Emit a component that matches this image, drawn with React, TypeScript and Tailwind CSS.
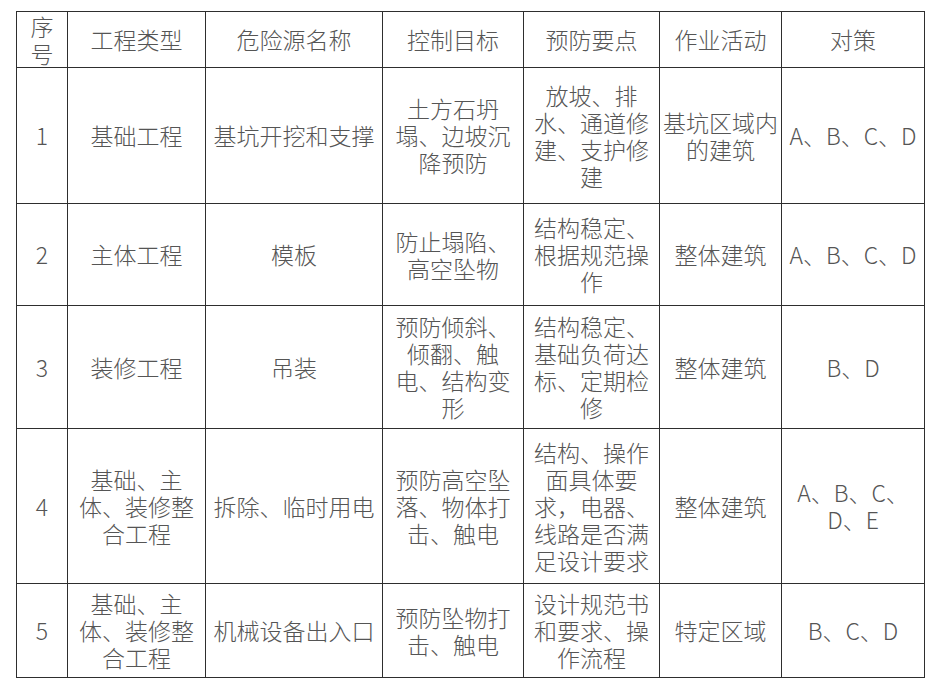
import React from "react";

type Row = {
  no: string;
  cells: string[];
  height: string;
};

const widths = [
  "w-[51px]",
  "w-[138px]",
  "w-[177px]",
  "w-[141px]",
  "w-[136px]",
  "w-[122px]",
  "w-[143px]",
];

const header = ["序\n号", "工程类型", "危险源名称", "控制目标", "预防要点", "作业活动", "对策"];

const rows: Row[] = [
  {
    no: "1",
    height: "h-[136px]",
    cells: [
      "基础工程",
      "基坑开挖和支撑",
      "土方石坍\n塌、边坡沉\n降预防",
      "放坡、排\n水、通道修\n建、支护修\n建",
      "基坑区域内\n的建筑",
      "A、B、C、D",
    ],
  },
  {
    no: "2",
    height: "h-[102px]",
    cells: [
      "主体工程",
      "模板",
      "防止塌陷、\n高空坠物",
      "结构稳定、\n根据规范操\n作",
      "整体建筑",
      "A、B、C、D",
    ],
  },
  {
    no: "3",
    height: "h-[123px]",
    cells: [
      "装修工程",
      "吊装",
      "预防倾斜、\n倾翻、触\n电、结构变\n形",
      "结构稳定、\n基础负荷达\n标、定期检\n修",
      "整体建筑",
      "B、D",
    ],
  },
  {
    no: "4",
    height: "h-[155px]",
    cells: [
      "基础、主\n体、装修整\n合工程",
      "拆除、临时用电",
      "预防高空坠\n落、物体打\n击、触电",
      "结构、操作\n面具体要\n求，电器、\n线路是否满\n足设计要求",
      "整体建筑",
      "A、B、C、\nD、E",
    ],
  },
  {
    no: "5",
    height: "h-[94px]",
    cells: [
      "基础、主\n体、装修整\n合工程",
      "机械设备出入口",
      "预防坠物打\n击、触电",
      "设计规范书\n和要求、操\n作流程",
      "特定区域",
      "B、C、D",
    ],
  },
];

function Cell({ text, width }: { text: string; width: string }) {
  return (
    <td
      className={`${width} border border-[#2e2e2e] p-0 text-center align-middle whitespace-pre-line`}
    >
      {text}
    </td>
  );
}

export default function App() {
  return (
    <div className="min-h-[694px] w-[945px] bg-white pl-[16px] pt-[11px]">
      <table
        className="table-fixed border-collapse text-[23px] leading-[27px] font-extralight text-[#555555]"
        style={{
          fontFamily:
            '"Noto Sans CJK SC", "Noto Sans", "Liberation Sans", sans-serif',
        }}
      >
        <tbody>
          <tr className="h-[56px]">
            {header.map((h, i) => (
              <Cell key={i} text={h} width={widths[i]} />
            ))}
          </tr>
          {rows.map((r) => (
            <tr key={r.no} className={r.height}>
              <Cell text={r.no} width={widths[0]} />
              {r.cells.map((c, i) => (
                <Cell key={i} text={c} width={widths[i + 1]} />
              ))}
            </tr>
          ))}
        </tbody>
      </table>
    </div>
  );
}
